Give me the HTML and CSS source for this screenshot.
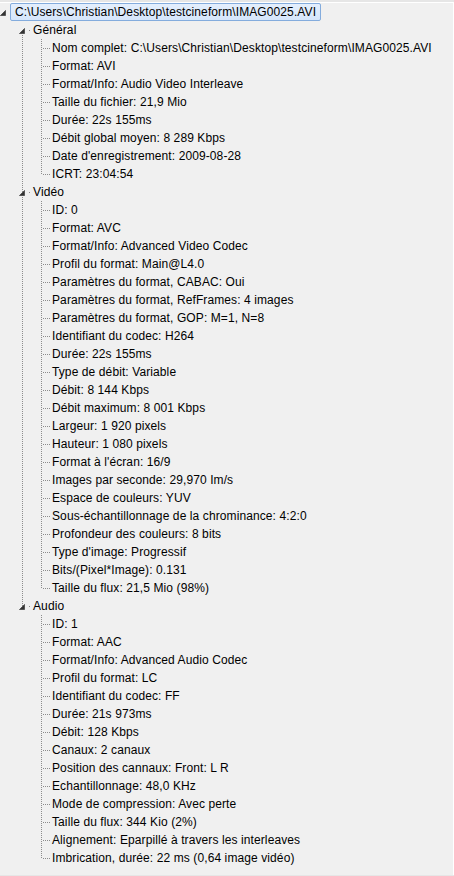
FILE: index.html
```html
<!DOCTYPE html>
<html lang="fr">
<head>
    <meta charset="UTF-8">
    <meta name="viewport" content="width=device-width, initial-scale=1.0">
    <title>MediaInfo - IMAG0025.AVI</title>
    <link rel="stylesheet" href="styles.css">
</head>
<body>

    <div class="panel">
        <ul class="tree">
            <li class="root">
                <div class="row">
                    <span class="toggle"><svg width="6" height="6" viewBox="0 0 6 6"><path d="M5.5 0.5 L5.5 5.5 L0.5 5.5 Z" fill="#333" stroke="#555" stroke-width="1"/></svg></span>
                    <span class="label selected">C:\Users\Christian\Desktop\testcineform\IMAG0025.AVI</span>
                </div>
                <ul class="sections">
                    <li class="section">
                        <div class="row">
                            <span class="toggle"><svg width="6" height="6" viewBox="0 0 6 6"><path d="M5.5 0.5 L5.5 5.5 L0.5 5.5 Z" fill="#333" stroke="#555" stroke-width="1"/></svg></span>
                            <span class="label">Général</span>
                        </div>
                        <ul class="leaves">
                            <li>Nom complet: C:\Users\Christian\Desktop\testcineform\IMAG0025.AVI</li>
                            <li>Format: AVI</li>
                            <li>Format/Info: Audio Video Interleave</li>
                            <li>Taille du fichier: 21,9 Mio</li>
                            <li>Durée: 22s 155ms</li>
                            <li>Débit global moyen: 8 289 Kbps</li>
                            <li>Date d'enregistrement: 2009-08-28</li>
                            <li>ICRT: 23:04:54</li>
                        </ul>
                    </li>
                    <li class="section">
                        <div class="row">
                            <span class="toggle"><svg width="6" height="6" viewBox="0 0 6 6"><path d="M5.5 0.5 L5.5 5.5 L0.5 5.5 Z" fill="#333" stroke="#555" stroke-width="1"/></svg></span>
                            <span class="label">Vidéo</span>
                        </div>
                        <ul class="leaves">
                            <li>ID: 0</li>
                            <li>Format: AVC</li>
                            <li>Format/Info: Advanced Video Codec</li>
                            <li>Profil du format: Main@L4.0</li>
                            <li>Paramètres du format, CABAC: Oui</li>
                            <li>Paramètres du format, RefFrames: 4 images</li>
                            <li>Paramètres du format, GOP: M=1, N=8</li>
                            <li>Identifiant du codec: H264</li>
                            <li>Durée: 22s 155ms</li>
                            <li>Type de débit: Variable</li>
                            <li>Débit: 8 144 Kbps</li>
                            <li>Débit maximum: 8 001 Kbps</li>
                            <li>Largeur: 1 920 pixels</li>
                            <li>Hauteur: 1 080 pixels</li>
                            <li>Format à l'écran: 16/9</li>
                            <li>Images par seconde: 29,970 Im/s</li>
                            <li>Espace de couleurs: YUV</li>
                            <li>Sous-échantillonnage de la chrominance: 4:2:0</li>
                            <li>Profondeur des couleurs: 8 bits</li>
                            <li>Type d'image: Progressif</li>
                            <li>Bits/(Pixel*Image): 0.131</li>
                            <li>Taille du flux: 21,5 Mio (98%)</li>
                        </ul>
                    </li>
                    <li class="section">
                        <div class="row">
                            <span class="toggle"><svg width="6" height="6" viewBox="0 0 6 6"><path d="M5.5 0.5 L5.5 5.5 L0.5 5.5 Z" fill="#333" stroke="#555" stroke-width="1"/></svg></span>
                            <span class="label">Audio</span>
                        </div>
                        <ul class="leaves">
                            <li>ID: 1</li>
                            <li>Format: AAC</li>
                            <li>Format/Info: Advanced Audio Codec</li>
                            <li>Profil du format: LC</li>
                            <li>Identifiant du codec: FF</li>
                            <li>Durée: 21s 973ms</li>
                            <li>Débit: 128 Kbps</li>
                            <li>Canaux: 2 canaux</li>
                            <li>Position des cannaux: Front: L R</li>
                            <li>Echantillonnage: 48,0 KHz</li>
                            <li>Mode de compression: Avec perte</li>
                            <li>Taille du flux: 344 Kio (2%)</li>
                            <li>Alignement: Eparpillé à travers les interleaves</li>
                            <li>Imbrication, durée: 22 ms (0,64 image vidéo)</li>
                        </ul>
                    </li>
                </ul>
            </li>
        </ul>
    </div>

</body>
</html>
```

FILE: styles.css
```css
html, body {
    margin: 0;
    padding: 0;
}
body {
    font-family: "Liberation Sans", Arial, sans-serif;
    font-size: 12px;
    letter-spacing: 0.1px;
    color: #000;
    background-color: #e6e6e6;
    padding-top: 2px;
}
.panel {
    background-color: #f0f0f0;
    border-top: 1px solid #fff;
    border-right: 1px solid #fff;
    height: 873px;
    box-sizing: border-box;
}
.tree, .sections, .leaves {
    list-style: none;
    margin: 0;
    padding: 0;
}
.row {
    display: flex;
    align-items: center;
    height: 18px;
    white-space: nowrap;
}
.toggle {
    display: flex;
    align-items: center;
    justify-content: center;
    width: 6px;
    height: 6px;
    margin-top: 1px;
}
.toggle svg {
    display: block;
}
.label {
    line-height: 16px;
    padding: 0 4px;
    border: 1px solid transparent;
}
.label.selected {
    background: linear-gradient(#e4effd, #d5e6fb);
    border-color: #84acdd;
    border-radius: 2px;
}

/* racine */
.root > .row .toggle {
    margin-left: 0;
    margin-right: 4px;
}

/* sections */
.section {
    background-image:
        repeating-linear-gradient(to bottom, #8c8c8c 0 1px, transparent 1px 2px),
        linear-gradient(#8c8c8c, #8c8c8c);
    background-repeat: no-repeat;
    background-size: 1px 100%, 1px 1px;
    background-position: 22px 0, 29px 9px;
}
.section:first-child {
    background-position: 22px 10px, 29px 9px;
}
.section:last-child {
    background-size: 1px 9px, 1px 1px;
}
.section > .row .toggle {
    margin-left: 19px;
}
.section > .row .label {
    padding-left: 4px;
    margin-left: 3px;
}

/* feuilles */
.leaves li {
    height: 18px;
    line-height: 18px;
    padding-left: 52px;
    white-space: nowrap;
    background-image:
        repeating-linear-gradient(to bottom, #8c8c8c 0 1px, transparent 1px 2px),
        repeating-linear-gradient(to right, #8c8c8c 0 1px, transparent 1px 2px);
    background-repeat: no-repeat;
    background-size: 1px 100%, 8px 1px;
    background-position: 41px 0, 43px 9px;
}
.leaves li:last-child {
    background-size: 1px 10px, 8px 1px;
}
```
